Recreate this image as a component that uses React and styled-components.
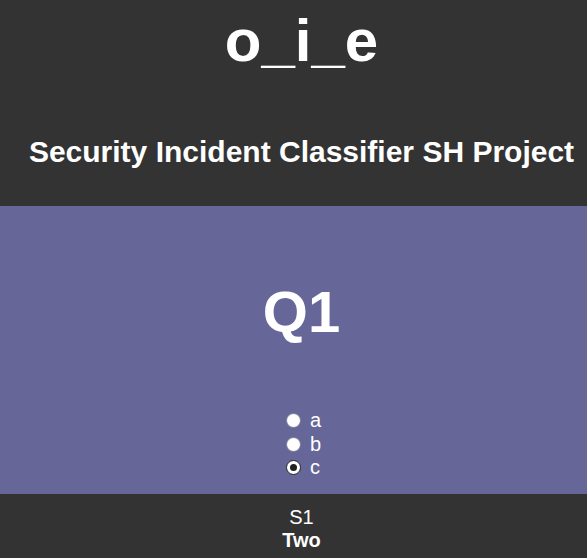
import styled, { createGlobalStyle } from 'styled-components'
import { useState } from 'react'

const GlobalStyle = createGlobalStyle`
  html, body {
    margin: 0;
    padding: 0;
    background: #333333;
    font-family: "Liberation Sans", Arial, sans-serif;
    color: white;
  }
`

const Header = styled.header`
  background-color: #333333;
  padding: 7px 0 36px 16px;
  text-align: center;
`

const Title = styled.h1`
  margin: 0;
  font-size: 60px;
  line-height: 68px;
  font-weight: 700;
`

const Subtitle = styled.h2`
  margin: 59px 0 0;
  font-size: 30px;
  line-height: 36px;
  font-weight: 700;
`

const QuestionPanel = styled.section`
  background-color: #666699;
  padding: 72px 0 14px 20px;
  display: flex;
  flex-direction: column;
  align-items: center;
`

const Question = styled.h2`
  margin: 0 0 0 -4px;
  font-size: 58px;
  line-height: 67px;
  font-weight: 700;
`

const Options = styled.div`
  margin-top: 64px;
  display: flex;
  flex-direction: column;
`

const Option = styled.label`
  display: flex;
  align-items: center;
  height: 23.5px;
  font-size: 20px;
  cursor: pointer;
`

const Radio = styled.input`
  appearance: none;
  box-sizing: border-box;
  flex: 0 0 15px;
  width: 15px;
  height: 15px;
  margin: 0 9px 0 0;
  border-radius: 50%;
  border: 1px solid #7a7a96;
  background: white;
  display: grid;
  place-items: center;

  &:checked {
    border: 1.5px solid #222222;
  }

  &:checked::after {
    content: '';
    width: 7px;
    height: 7px;
    border-radius: 50%;
    background: #222222;
  }
`

const Footer = styled.footer`
  background-color: #333333;
  padding: 12px 0 7px 16px;
  text-align: center;
`

const FooterLine = styled.div`
  font-size: 20px;
  line-height: 23px;
  font-weight: ${({ $bold }) => ($bold ? 700 : 400)};
`

const choices = ['a', 'b', 'c']

export default function App() {
  const [answer, setAnswer] = useState('c')

  return (
    <>
      <GlobalStyle />
      <Header>
        <Title>o_i_e</Title>
        <Subtitle>Security Incident Classifier SH Project</Subtitle>
      </Header>
      <QuestionPanel>
        <Question>Q1</Question>
        <Options>
          {choices.map(choice => (
            <Option key={choice}>
              <Radio
                type="radio"
                name="q1"
                value={choice}
                checked={answer === choice}
                onChange={() => setAnswer(choice)}
              />
              {choice}
            </Option>
          ))}
        </Options>
      </QuestionPanel>
      <Footer>
        <FooterLine>S1</FooterLine>
        <FooterLine $bold>Two</FooterLine>
      </Footer>
    </>
  )
}
